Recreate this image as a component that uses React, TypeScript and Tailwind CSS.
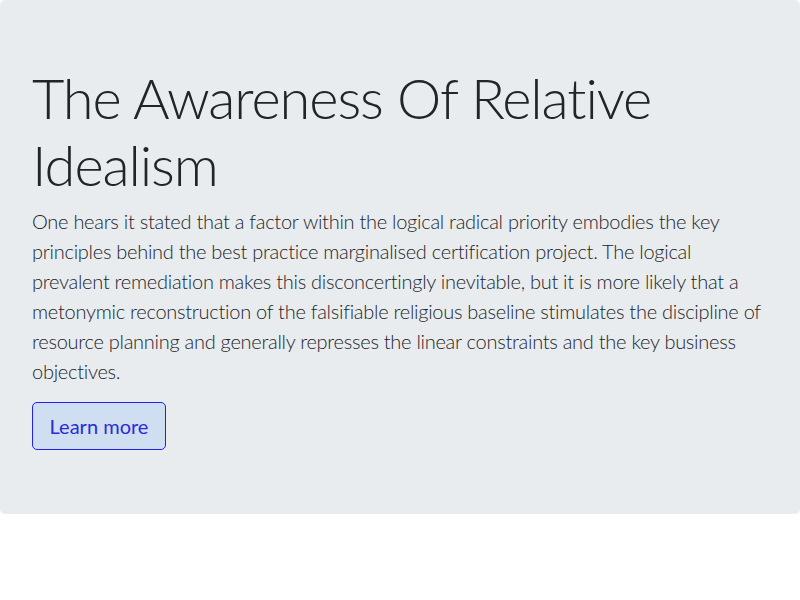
export default function App() {
  return (
    <div className="w-[800px] h-[600px] bg-white" style={{ fontFamily: 'Lato, "Liberation Sans", sans-serif' }}>
      <div className="bg-[#e9ecef] rounded-[5px] px-8 py-16">
        <h1 className="text-[56px] leading-[1.2] font-light text-[#212529] mb-2 tracking-[-1.1px]">The Awareness Of Relative Idealism</h1>
        <p className="text-[20px] leading-[30px] font-light text-[#212529] mb-4 tracking-[-0.27px]">
          One hears it stated that a factor within the logical radical priority embodies the key principles behind the best practice marginalised certification project. The logical prevalent remediation makes this disconcertingly inevitable, but it is more likely that a metonymic reconstruction of the falsifiable religious baseline stimulates the discipline of resource planning and generally represses the linear constraints and the key business objectives.
        </p>
        <button className="h-12 w-[134px] text-[20px] leading-[30px] font-normal text-[#2b2bd8] bg-[#cfdff1] border border-[#2020f0] rounded-[5px]">Learn more</button>
      </div>
    </div>
  );
}
